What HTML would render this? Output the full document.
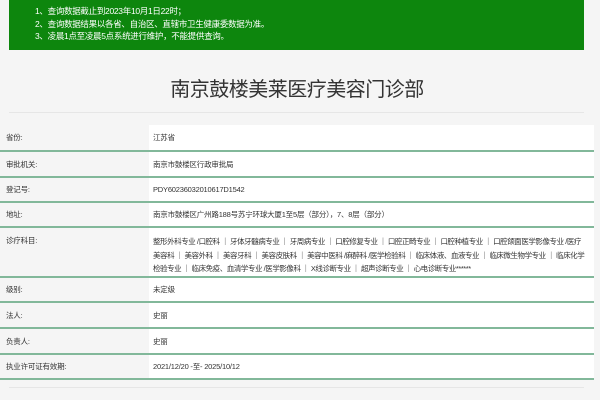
<!DOCTYPE html>
<html><head><meta charset="utf-8"><style>
*{margin:0;padding:0;box-sizing:border-box}
body{width:600px;height:400px;overflow:hidden;background:#f5f5f5;font-family:"Liberation Sans","Noto Sans CJK SC",sans-serif;position:relative}
.banner{position:absolute;left:9px;top:0;width:575px;height:50px;background:#0d860d;color:#fff;font-size:8.5px;line-height:12.5px;padding:5px 0 0 26px;letter-spacing:-0.3px}
h1{position:absolute;top:78px;left:0;width:594px;text-align:center;font-weight:normal;font-size:20px;line-height:24px;color:#333;letter-spacing:-0.5px}
.hr{position:absolute;left:9px;width:575px;height:1px;background:#e6e6e6}
.row{position:absolute;left:0;width:594px;border-bottom:2px solid #82b89a;font-size:7.5px;color:#333;letter-spacing:-0.2px}
.row .l{position:absolute;left:0;top:0;bottom:0;width:149px;background:#f5f5f5;padding-left:6px;display:flex;align-items:center}
.row .v{position:absolute;left:149px;top:0;bottom:0;right:0;background:#fff;padding-left:4px;display:flex;align-items:center}
.row.tall .l,.row.tall .v{align-items:flex-start;padding-top:7px}
.row.tall .v{line-height:13.5px;padding-right:6px;letter-spacing:-0.45px}
</style></head><body>
<div class="banner">1、查询数据截止到2023年10月1日22时；<br>2、查询数据结果以各省、自治区、直辖市卫生健康委数据为准。<br>3、凌晨1点至凌晨5点系统进行维护，不能提供查询。</div>
<h1>南京鼓楼美莱医疗美容门诊部</h1>
<div class="hr" style="top:112px"></div>
<div class="row" style="top:125px;height:27px"><div class="l">省份:</div><div class="v">江苏省</div></div>
<div class="row" style="top:152px;height:26px"><div class="l">审批机关:</div><div class="v">南京市鼓楼区行政审批局</div></div>
<div class="row" style="top:178px;height:25px"><div class="l">登记号:</div><div class="v">PDY60236032010617D1542</div></div>
<div class="row" style="top:203px;height:25px"><div class="l">地址:</div><div class="v">南京市鼓楼区广州路188号苏宁环球大厦1至5层（部分），7、8层（部分）</div></div>
<div class="row tall" style="top:228px;height:50px"><div class="l">诊疗科目:</div><div class="v">整形外科专业 /口腔科 ｜ 牙体牙髓病专业 ｜ 牙周病专业 ｜ 口腔修复专业 ｜ 口腔正畸专业 ｜ 口腔种植专业 ｜ 口腔颌面医学影像专业 /医疗美容科 ｜ 美容外科 ｜ 美容牙科 ｜ 美容皮肤科 ｜ 美容中医科 /麻醉科 /医学检验科 ｜ 临床体液、血液专业 ｜ 临床微生物学专业 ｜ 临床化学检验专业 ｜ 临床免疫、血清学专业 /医学影像科 ｜ X线诊断专业 ｜ 超声诊断专业 ｜ 心电诊断专业******</div></div>
<div class="row" style="top:278px;height:25px"><div class="l">级别:</div><div class="v">未定级</div></div>
<div class="row" style="top:303px;height:26px"><div class="l">法人:</div><div class="v">史丽</div></div>
<div class="row" style="top:329px;height:26px"><div class="l">负责人:</div><div class="v">史丽</div></div>
<div class="row" style="top:355px;height:25px"><div class="l">执业许可证有效期:</div><div class="v">2021/12/20 -至- 2025/10/12</div></div>
<div class="hr" style="top:387px"></div>
</body></html>
